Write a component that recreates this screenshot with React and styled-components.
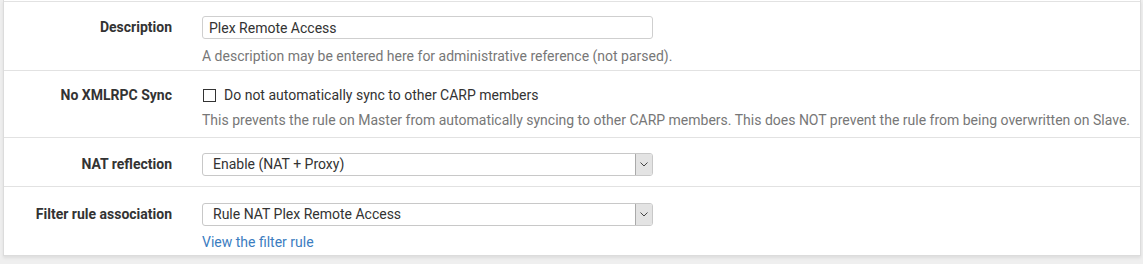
import styled, { createGlobalStyle } from "styled-components";

const GlobalStyle = createGlobalStyle`
    html, body {
        margin: 0;
        padding: 0;
        background: #efefef;
        font-family: Roboto, "Liberation Sans", Arial, sans-serif;
    }
`;

const Page = styled.div`
    padding: 0 2px 8px 3px;
    width: 1138px;
`;

const Panel = styled.div`
    background: #fff;
    border-left: 1px solid #dcdcdc;
    border-right: 1px solid #dcdcdc;
    border-bottom: 1px solid #dcdcdc;
    box-shadow: 0 2px 3px rgba(0, 0, 0, 0.08);
    padding-top: 1px;
`;

const Row = styled.div`
    display: flex;
    border-top: 1px solid #e2e2e2;
    padding: ${(p) => p.$pad || "14px 0 4px"};
`;

const Label = styled.div`
    width: 168px;
    flex-shrink: 0;
    text-align: right;
    font-weight: bold;
    font-size: 14px;
    color: #333;
    line-height: ${(p) => p.$lh || "23px"};
    padding-right: 30px;
`;

const Control = styled.div`
    flex: 1;
    display: flex;
    flex-direction: column;
    align-items: flex-start;
`;

const TextInput = styled.input`
    box-sizing: border-box;
    width: 451px;
    height: 23px;
    border: 1px solid #cfcfcf;
    border-radius: 3px;
    padding: 0 6px;
    font-family: inherit;
    font-size: 14px;
    color: #333;
    outline: none;
`;

const Help = styled.div`
    font-size: 14px;
    line-height: 20px;
    color: #777;
    margin-top: ${(p) => p.$top || "7px"};
`;

const CheckLine = styled.label`
    display: flex;
    align-items: center;
    height: 20px;
    font-size: 14px;
    color: #333;
`;

const Box = styled.span`
    width: 11px;
    height: 11px;
    border: 1px solid #333;
    margin: 0 8px 0 1px;
    background: #fff;
`;

const Select = styled.div`
    box-sizing: border-box;
    width: 451px;
    height: 23px;
    border: 1px solid #c8c8c8;
    border-radius: 3px;
    display: flex;
    align-items: stretch;
    font-size: 14px;
    color: #333;
    overflow: hidden;
`;

const SelectText = styled.div`
    flex: 1;
    padding-left: 10px;
    line-height: 21px;
`;

const Arrow = styled.div`
    width: 16px;
    background: #e3e3e3;
    border-left: 1px solid #aaa;
    display: flex;
    align-items: center;
    justify-content: center;
`;

const Link = styled.a`
    font-size: 14px;
    line-height: 20px;
    color: #3b7dbf;
    text-decoration: none;
    margin-top: 6px;
`;

const Chevron = () => (
    <svg width="8" height="5" viewBox="0 0 8 5">
        <path d="M0.5 0.5 L4 4 L7.5 0.5" fill="none" stroke="#444" strokeWidth="1" />
    </svg>
);

const Dropdown = ({ value }) => (
    <Select>
        <SelectText>{value}</SelectText>
        <Arrow>
            <Chevron />
        </Arrow>
    </Select>
);

const App = () => {
    return (
        <Page>
            <GlobalStyle />
            <Panel>
                <Row>
                    <Label>Description</Label>
                    <Control>
                        <TextInput type="text" defaultValue="Plex Remote Access" />
                        <Help>A description may be entered here for administrative reference (not parsed).</Help>
                    </Control>
                </Row>
                <Row $pad="14px 0 7px">
                    <Label $lh="20px">No XMLRPC Sync</Label>
                    <Control>
                        <CheckLine>
                            <Box />
                            Do not automatically sync to other CARP members
                        </CheckLine>
                        <Help $top="5px">
                            This prevents the rule on Master from automatically syncing to other CARP members. This does NOT prevent the rule from being overwritten on Slave.
                        </Help>
                    </Control>
                </Row>
                <Row $pad="15px 0 10px">
                    <Label>NAT reflection</Label>
                    <Control>
                        <Dropdown value="Enable (NAT + Proxy)" />
                    </Control>
                </Row>
                <Row $pad="16px 0 3px">
                    <Label>Filter rule association</Label>
                    <Control>
                        <Dropdown value="Rule NAT Plex Remote Access" />
                        <Link href="#">View the filter rule</Link>
                    </Control>
                </Row>
            </Panel>
        </Page>
    );
};

export default App;
